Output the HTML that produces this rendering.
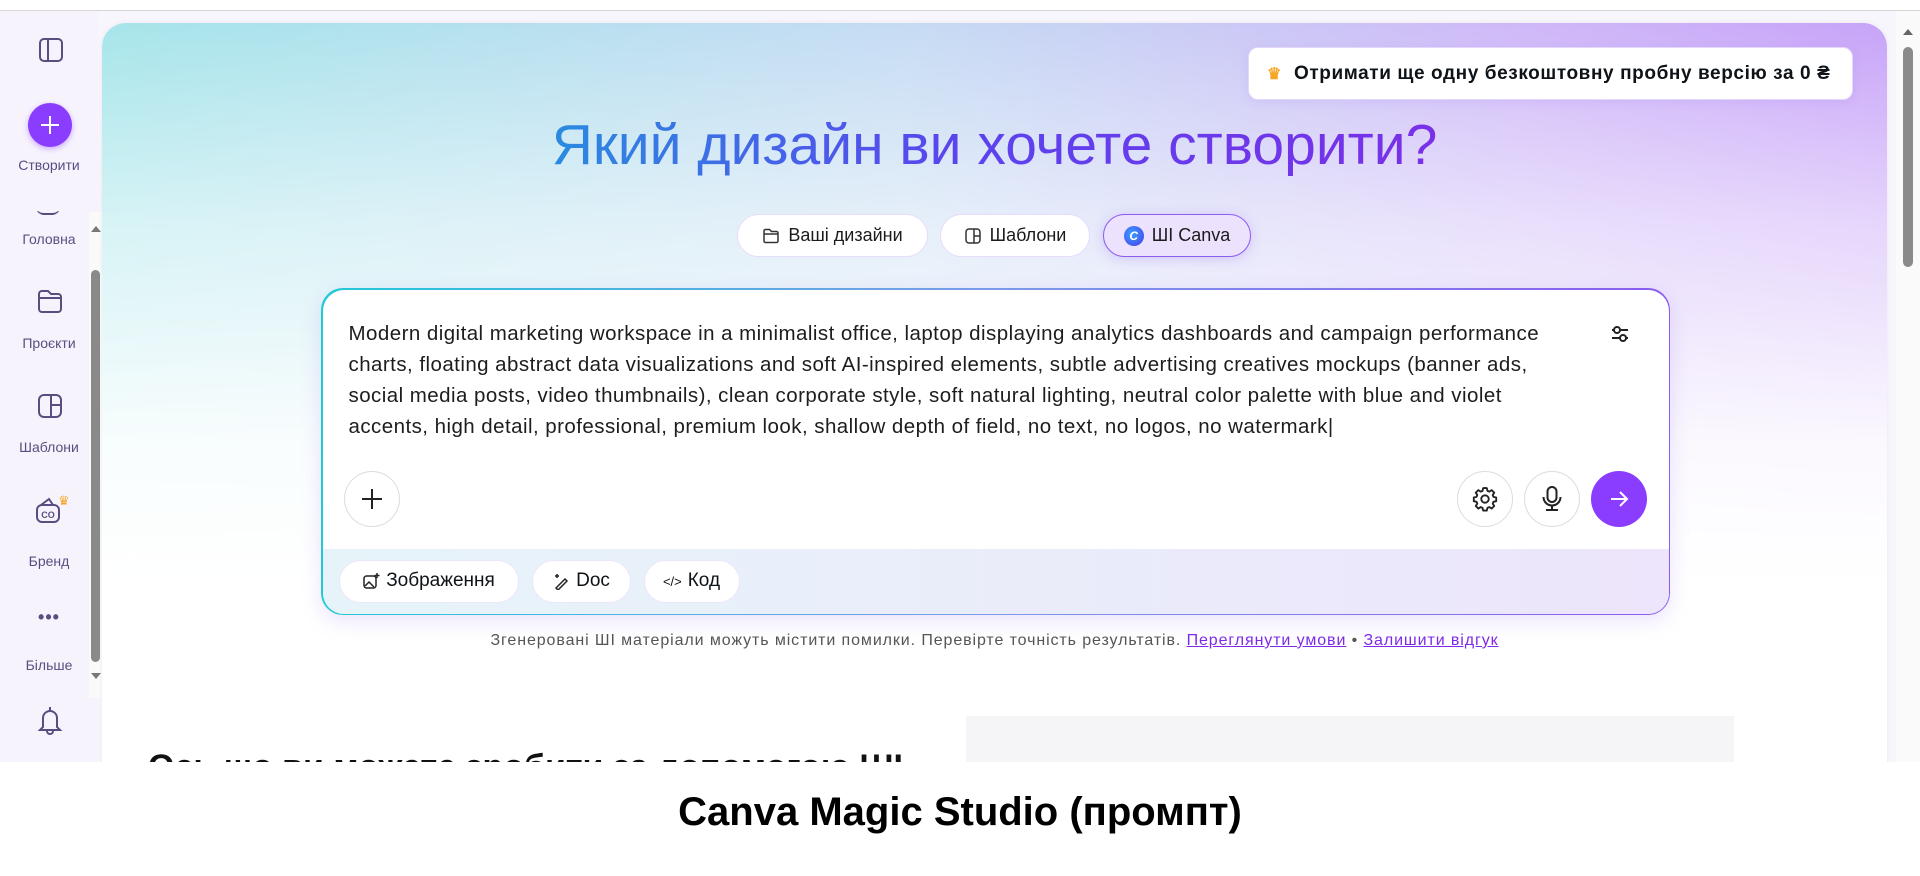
<!DOCTYPE html>
<html><head><meta charset="utf-8"><style>
*{margin:0;padding:0;box-sizing:border-box}
body{width:1920px;height:876px;background:#fff;position:relative;overflow:hidden;font-family:"Liberation Sans","Noto Sans CJK SC",sans-serif;color:#0e1318}
.abs{position:absolute}
#shot{position:absolute;left:0;top:10px;width:1920px;height:752px;overflow:hidden;border-top:1px solid #d6d6d6;background:#f8f6fd}
.side{left:0;top:0;width:98px;height:752px;background:#f6f3fd}
.lbl{position:absolute;width:98px;text-align:center;font-size:14px;color:#5b4d80;left:0}
.card{left:102px;top:12px;width:1785px;height:900px;border-radius:24px;overflow:hidden;background:#fff;box-shadow:0 0 6px rgba(0,0,0,.06)}
.grad{position:absolute;inset:0;background:linear-gradient(90deg,#a6e5ea 0%,#c6dcf3 45%,#cfb8f8 80%,#c7a3f8 100%)}
.fade{position:absolute;inset:0;background:linear-gradient(180deg,rgba(255,255,255,0) 0,rgba(255,255,255,.55) 200px,rgba(255,255,255,.92) 420px,#fff 560px)}
.pill{position:absolute;height:43px;border-radius:22px;background:#fff;border:1px solid #e6dcfb;font-size:18px;display:flex;align-items:center;justify-content:center;gap:8px;color:#1b1b1b}
.ibtn{position:absolute;width:56px;height:56px;border-radius:50%;border:1px solid #dcdcdc;background:#fff;display:flex;align-items:center;justify-content:center}
.chip{position:absolute;height:43px;top:270px;border-radius:22px;background:#fff;border:1px solid #ece6fa;font-size:19px;display:flex;align-items:center;justify-content:center;gap:6px}
</style></head><body>
<div id="shot">
 <div class="abs side">
  <svg class="abs" style="left:38px;top:26px" width="26" height="26" viewBox="0 0 26 26"><rect x="2" y="2" width="22" height="22" rx="4" fill="none" stroke="#5b4d80" stroke-width="2"/><line x1="10" y1="2" x2="10" y2="24" stroke="#5b4d80" stroke-width="2"/></svg>
  <div class="abs" style="left:28px;top:92px;width:44px;height:44px;border-radius:50%;background:#8b3dff;box-shadow:0 2px 6px rgba(139,61,255,.4)"></div>
  <svg class="abs" style="left:38px;top:102px" width="24" height="24"><path d="M12 3v18M3 12h18" stroke="#fff" stroke-width="2"/></svg>
  <div class="lbl" style="top:146px">Створити</div>
  <div class="abs" style="left:0;top:200px;width:89px;height:480px;overflow:hidden">
   <div class="abs" style="left:36px;top:-10px;width:24px;height:14px;border-bottom:2px solid #5b4d80;border-radius:0 0 8px 8px"></div>
   <div class="lbl" style="top:20px">Головна</div>
   <svg class="abs" style="left:36px;top:76px" width="28" height="28" viewBox="0 0 28 28"><path d="M3 7a3 3 0 0 1 3-3h6l3 3h7a3 3 0 0 1 3 3v12a3 3 0 0 1-3 3H6a3 3 0 0 1-3-3z M3 11h22" fill="none" stroke="#5b4d80" stroke-width="2"/></svg>
   <div class="lbl" style="top:124px">Проєкти</div>
   <svg class="abs" style="left:36px;top:181px" width="28" height="28" viewBox="0 0 28 28"><rect x="3" y="3" width="22" height="22" rx="5" fill="none" stroke="#5b4d80" stroke-width="2"/><path d="M15 3v22M15 13h10" stroke="#5b4d80" stroke-width="2"/></svg>
   <div class="lbl" style="top:228px">Шаблони</div>
   <svg class="abs" style="left:34px;top:285px" width="30" height="30" viewBox="0 0 30 30"><rect x="3" y="9" width="22" height="17" rx="5" fill="none" stroke="#5b4d80" stroke-width="2"/><path d="M7 9l8-6 4 6" fill="none" stroke="#5b4d80" stroke-width="2"/><text x="14" y="22" font-size="9" font-weight="bold" text-anchor="middle" fill="#5b4d80" font-family="Liberation Sans">CO</text></svg>
   <div class="abs" style="left:58px;top:282px;color:#f5a623;font-size:13px">♛</div>
   <div class="lbl" style="top:342px">Бренд</div>
   <div class="lbl" style="top:396px;font-size:18px;font-weight:bold;letter-spacing:1px">•••</div>
   <div class="lbl" style="top:446px">Більше</div>
  </div>
  <div class="abs" style="left:89px;top:201px;width:14px;height:486px;background:#fafafa"></div>
  <div class="abs" style="left:91px;top:215px;border:5px solid transparent;border-bottom:6px solid #777;border-top:0"></div>
  <div class="abs" style="left:91px;top:662px;border:5px solid transparent;border-top:6px solid #777;border-bottom:0"></div>
  <div class="abs" style="left:91px;top:259px;width:9px;height:392px;border-radius:5px;background:#8a8a8a"></div>
  <svg class="abs" style="left:37px;top:694px" width="26" height="30" viewBox="0 0 26 30"><path d="M13 2v3M6 22V13a7 7 0 0 1 14 0v9l3 3H3z M10 26a3 3 0 0 0 6 0" fill="none" stroke="#5b4d80" stroke-width="2"/></svg>
 </div>
 <div class="abs card">
  <div class="grad"></div><div class="fade"></div>
  <div class="abs" style="left:1146px;top:24px;width:605px;height:53px;background:#fff;border:1px solid #e3d8fb;border-radius:10px;box-shadow:0 2px 10px rgba(150,110,240,.15);font-size:19px;letter-spacing:.6px;font-weight:bold;display:flex;align-items:center;padding-left:18px;gap:12px;white-space:nowrap"><span style="color:#f5a623;font-size:16px">♛</span>Отримати ще одну безкоштовну пробну версію за 0 ₴</div>
  <div class="abs" style="left:0;width:1785px;top:87px;text-align:center;font-size:57px;line-height:70px;"><span style="background:linear-gradient(90deg,#2a8be0,#5a44ee 45%,#7a2fe8);-webkit-background-clip:text;background-clip:text;color:transparent">Який дизайн ви хочете створити?</span></div>
  <div class="pill" style="left:635px;top:191px;width:191px"><svg width="18" height="18" viewBox="0 0 18 18"><path d="M2 4a1.5 1.5 0 0 1 1.5-1.5h4l2 2h5A1.5 1.5 0 0 1 16 6v8a1.5 1.5 0 0 1-1.5 1.5h-11A1.5 1.5 0 0 1 2 14zM2 7h14" fill="none" stroke="#333" stroke-width="1.5"/></svg>Ваші дизайни</div>
  <div class="pill" style="left:838px;top:191px;width:150px"><svg width="18" height="18" viewBox="0 0 18 18"><rect x="2" y="2" width="14" height="14" rx="3" fill="none" stroke="#333" stroke-width="1.5"/><path d="M10 2v14M10 9h6" stroke="#333" stroke-width="1.5"/></svg>Шаблони</div>
  <div class="pill" style="left:1001px;top:191px;width:148px;background:#ece2fd;border:1.5px solid #8b5cf0;box-shadow:0 2px 12px rgba(139,92,240,.25)"><span style="width:20px;height:20px;border-radius:50%;background:radial-gradient(circle at 40% 40%,#3aa0ff,#4a3ae8);color:#fff;font-size:12px;font-weight:bold;display:flex;align-items:center;justify-content:center;font-style:italic">C</span>ШІ Canva</div>
  <div class="abs" style="left:219px;top:265px;width:1349px;height:327px;border-radius:22px;padding:1.5px;background:linear-gradient(90deg,#22c8d8,#7b9ae8 50%,#8b5cf0);box-shadow:0 6px 20px rgba(140,100,240,.18)">
   <div style="position:relative;width:100%;height:100%;border-radius:21px;background:#fff;overflow:hidden">
    <div class="abs" style="left:0;top:259px;width:100%;height:70px;background:linear-gradient(90deg,#e6f4fa,#ede5fb)"></div>
    <div class="abs" style="left:26px;top:28px;font-size:20.5px;letter-spacing:.45px;line-height:31px;color:#1d1d1d;white-space:nowrap">Modern digital marketing workspace in a minimalist office, laptop displaying analytics dashboards and campaign performance<br>charts, floating abstract data visualizations and soft AI-inspired elements, subtle advertising creatives mockups (banner ads,<br>social media posts, video thumbnails), clean corporate style, soft natural lighting, neutral color palette with blue and violet<br>accents, high detail, professional, premium look, shallow depth of field, no text, no logos, no watermark|</div>
    <svg class="abs" style="left:1286px;top:33px" width="22" height="22" viewBox="0 0 22 22"><path d="M3 7h16M3 15h16" stroke="#222" stroke-width="2"/><circle cx="8" cy="7" r="3" fill="#fff" stroke="#222" stroke-width="2"/><circle cx="14" cy="15" r="3" fill="#fff" stroke="#222" stroke-width="2"/></svg>
    <div class="ibtn" style="left:21px;top:181px"><svg width="26" height="26"><path d="M13 3v20M3 13h20" stroke="#222" stroke-width="2"/></svg></div>
    <div class="ibtn" style="left:1134px;top:181px"><svg width="28" height="28" viewBox="0 0 24 24"><path d="M12 2.5l1.6.2.5 2.3 1.6.7 2-1.3 2.2 2.2-1.3 2 .7 1.6 2.3.5v3.2l-2.3.5-.7 1.6 1.3 2-2.2 2.2-2-1.3-1.6.7-.5 2.3h-3.2l-.5-2.3-1.6-.7-2 1.3-2.2-2.2 1.3-2-.7-1.6-2.3-.5v-3.2l2.3-.5.7-1.6-1.3-2 2.2-2.2 2 1.3 1.6-.7.5-2.3z" fill="none" stroke="#222" stroke-width="1.6" stroke-linejoin="round"/><circle cx="12" cy="12" r="3.2" fill="none" stroke="#222" stroke-width="1.6"/></svg></div>
    <div class="ibtn" style="left:1201px;top:181px"><svg width="26" height="28" viewBox="0 0 26 28"><rect x="8.5" y="2" width="9" height="15" rx="4.5" fill="none" stroke="#222" stroke-width="2"/><path d="M4.5 12a8.5 8.5 0 0 0 17 0M13 21v4M7 25h12" fill="none" stroke="#222" stroke-width="2"/></svg></div>
    <div class="ibtn" style="left:1268px;top:181px;background:#8b3dff;border:none"><svg width="24" height="24"><path d="M4 12h16M13 5l7 7-7 7" fill="none" stroke="#fff" stroke-width="2"/></svg></div>
    <div class="chip" style="left:16px;width:180px"><svg width="18" height="18" viewBox="0 0 18 18"><rect x="2" y="4" width="12" height="12" rx="2.5" fill="none" stroke="#222" stroke-width="1.5"/><path d="M3 14l4-4 5 5M15 1v5M12.5 3.5h5" fill="none" stroke="#222" stroke-width="1.5"/></svg>Зображення</div>
    <div class="chip" style="left:209px;width:99px"><svg width="18" height="18" viewBox="0 0 18 18"><path d="M4 16l9-9 2 2-9 9zM5 2v4M3 4h4" fill="none" stroke="#222" stroke-width="1.5"/></svg>Doc</div>
    <div class="chip" style="left:321px;width:96px"><span style="font-size:13px">&lt;/&gt;</span>Код</div>
   </div>
  </div>
  <div class="abs" style="left:0;width:1785px;top:609px;text-align:center;font-size:16px;letter-spacing:.9px;color:#555;white-space:nowrap">Згенеровані ШІ матеріали можуть містити помилки. Перевірте точність результатів. <u style="color:#7d2ae8">Переглянути умови</u> • <u style="color:#7d2ae8">Залишити відгук</u></div>
  <div class="abs" style="left:864px;top:693px;width:768px;height:70px;background:#f5f5f7"></div>
  <div class="abs" style="left:46px;top:725px;font-size:34px;font-weight:bold;color:#111;white-space:nowrap">Ось що ви можете зробити за допомогою ШІ</div>
 </div>
 <div class="abs" style="left:1896px;top:0;width:24px;height:752px;background:#fafafa"></div>
 <div class="abs" style="left:1903px;top:18px;border:5px solid transparent;border-bottom:6px solid #666;border-top:0"></div>
 <div class="abs" style="left:1903px;top:36px;width:10px;height:220px;border-radius:5px;background:#8a8a8a"></div>
</div>
<div class="abs" style="left:0;top:790px;width:1920px;text-align:center;font-size:40px;font-weight:bold;color:#000">Canva Magic Studio (промпт)</div>
</body></html>
